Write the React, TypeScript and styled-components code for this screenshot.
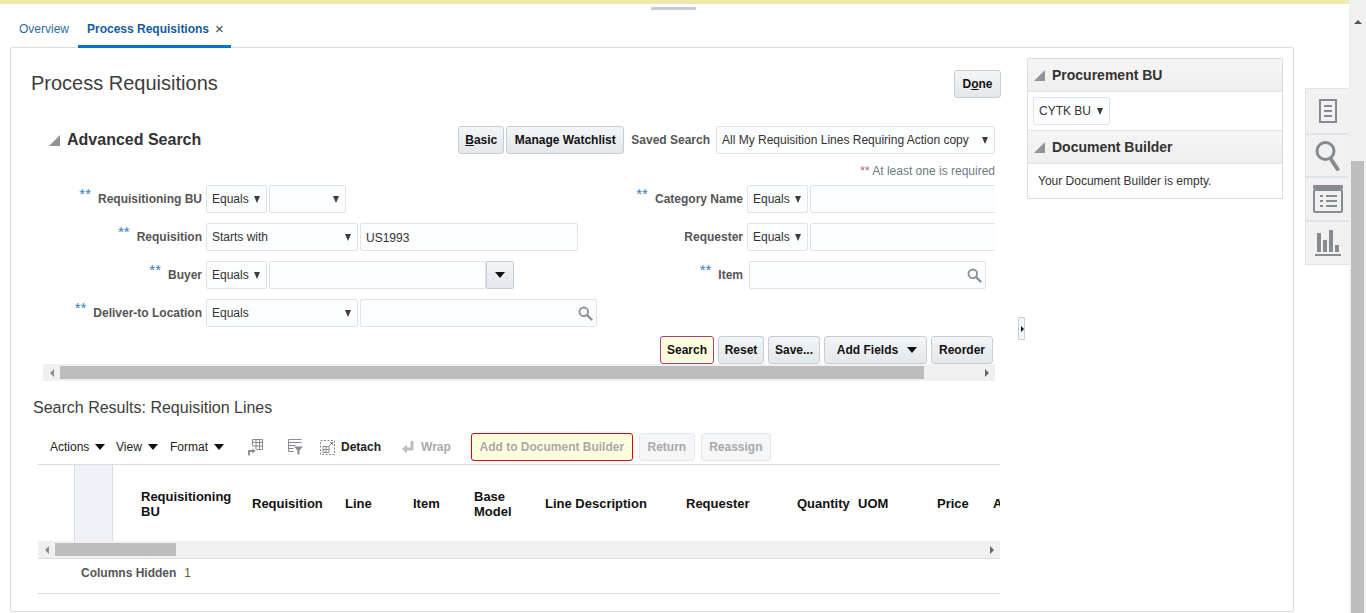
import React from "react";
import styled, { createGlobalStyle } from "styled-components";

const GlobalStyle = createGlobalStyle`
  html, body {
    margin: 0;
    padding: 0;
    height: 613px;
    overflow: hidden;
    background: #ffffff;
    font-family: "Liberation Sans", Arial, sans-serif;
    font-size: 12px;
    color: #333333;
  }
  * {
    box-sizing: border-box;
  }
`;

const Page = styled.div`
  display: flex;
  width: 1366px;
  height: 613px;
  overflow: hidden;
  position: relative;
`;

const Main = styled.div`
  width: 1349px;
  display: flex;
  flex-direction: column;
`;

const TopStripe = styled.div`
  height: 4px;
  background: #efe9ab;
`;

const TopHandle = styled.div`
  position: absolute;
  top: 7px;
  left: 651px;
  width: 45px;
  height: 3px;
  background: #c6ccd2;
  border-radius: 1px;
`;

const VScroll = styled.div`
  width: 17px;
  background: #f0f0f0;
  display: flex;
  flex-direction: column;
  align-items: center;
`;

const VArrowBox = styled.div`
  height: 161px;
  padding-top: 6px;
`;

const VThumb = styled.div`
  width: 13px;
  flex: 1;
  background: #bdbdbd;
`;

const TabBar = styled.div`
  height: 44px;
  margin-bottom: -1px;
  padding-left: 10px;
  display: flex;
  position: relative;
  z-index: 1;
`;

const Tab = styled.div<{ $active?: boolean }>`
  display: flex;
  align-items: center;
  padding: 8px 0 0 9px;
  width: ${(p) => (p.$active ? "153px" : "68px")};
  color: ${(p) => (p.$active ? "#145c9e" : "#2a6ca8")};
  font-weight: ${(p) => (p.$active ? "bold" : "normal")};
  border-bottom: 3px solid ${(p) => (p.$active ? "#0572ce" : "transparent")};
`;

const TabClose = styled.span`
  margin-left: 6px;
  font-size: 15px;
  line-height: 12px;
  font-weight: normal;
  color: #444444;
`;

const Body = styled.div`
  display: flex;
  padding-left: 10px;
`;

const Frame = styled.div`
  width: 1284px;
  height: 565px;
  border: 1px solid #d6dfe6;
  border-radius: 2px;
  display: flex;
`;

const LeftCol = styled.div`
  width: 1006px;
  flex-shrink: 0;
`;

const TitleRow = styled.div`
  margin-top: 22px;
  padding: 0 16px 0 20px;
  height: 28px;
  display: flex;
  align-items: center;
  justify-content: space-between;
`;

const PageTitle = styled.h1`
  margin: 0 0 2px;
  font-size: 20px;
  font-weight: normal;
  color: #3d3d3d;
`;

const Button = styled.button<{ $width?: number; $tone?: "focus" | "disabled" | "alert" }>`
  height: 28px;
  width: ${(p) => (p.$width ? `${p.$width}px` : "auto")};
  padding: 0;
  flex-shrink: 0;
  font-family: inherit;
  font-size: 12px;
  font-weight: bold;
  border-radius: 3px;
  color: ${(p) => (p.$tone === "disabled" || p.$tone === "alert" ? "#a9a9a9" : "#111111")};
  border: 1px solid
    ${(p) =>
      p.$tone === "focus"
        ? "#a8407f"
        : p.$tone === "alert"
        ? "#e60000"
        : p.$tone === "disabled"
        ? "#e4e8ec"
        : "#c4ced7"};
  background: ${(p) =>
    p.$tone === "focus" || p.$tone === "alert"
      ? "#ffffe0"
      : p.$tone === "disabled"
      ? "#f4f6f8"
      : "linear-gradient(#f3f5f7, #e4e8ec)"};
`;

const SearchBox = styled.div`
  margin: 28px 0 0 32px;
  width: 952px;
`;

const SearchHeader = styled.div`
  height: 28px;
  display: flex;
  align-items: center;
  padding-left: 6px;
  gap: 2px;
`;

const Disclosure = styled.span`
  width: 0;
  height: 0;
  flex-shrink: 0;
  border-bottom: 11px solid #909498;
  border-left: 11px solid transparent;
`;

const SearchHeading = styled.h2`
  margin: 0 auto 0 5px;
  font-size: 16px;
  font-weight: bold;
  color: #333333;
`;

const SavedLabel = styled.span`
  margin: 0 4px 0 5px;
  font-weight: bold;
  color: #555555;
`;

const RequiredNote = styled.div`
  margin-top: 8px;
  height: 18px;
  line-height: 18px;
  text-align: right;
  color: #6b7b88;
`;

const RedStars = styled.span`
  color: #b06a6a;
`;

const FormGrid = styled.div`
  margin-top: 5px;
  display: flex;
  overflow: hidden;
`;

const FormColumn = styled.div<{ $width: number }>`
  width: ${(p) => p.$width}px;
  flex-shrink: 0;
  display: flex;
  flex-direction: column;
  gap: 10px;
`;

const FormRow = styled.div`
  height: 28px;
  display: flex;
  align-items: center;
`;

const RowLabel = styled.div<{ $width: number }>`
  width: ${(p) => p.$width}px;
  flex-shrink: 0;
  margin-right: 4px;
  display: flex;
  justify-content: flex-end;
  white-space: nowrap;
  font-weight: bold;
  color: #555555;
`;

const Stars = styled.span`
  color: #2f7fc1;
  font-size: 15px;
  font-weight: normal;
  line-height: 10px;
  margin-right: 7px;
  transform: translateY(-3px);
`;

const Select = styled.div<{ $width: number }>`
  width: ${(p) => p.$width}px;
  height: 28px;
  flex-shrink: 0;
  margin-right: 2px;
  padding: 0 6px 0 5px;
  display: flex;
  align-items: center;
  justify-content: space-between;
  background: #fcfdfe;
  border: 1px solid #dfe4ea;
  border-radius: 2px;
  color: #333333;
`;

const SavedSelect = styled(Select)`
  margin-right: 0;
`;

const Caret = styled.span<{ $big?: boolean }>`
  width: 0;
  height: 0;
  flex-shrink: 0;
  border-left: ${(p) => (p.$big ? 5.5 : 3.5)}px solid transparent;
  border-right: ${(p) => (p.$big ? 5.5 : 3.5)}px solid transparent;
  border-top: ${(p) => (p.$big ? 6 : 7)}px solid ${(p) => (p.$big ? "#111111" : "#3c3c3c")};
`;

const Input = styled.div<{ $width: number; $indent?: number }>`
  width: ${(p) => p.$width}px;
  height: 28px;
  flex-shrink: 0;
  margin-left: ${(p) => p.$indent ?? 0}px;
  padding: 1px 3px 0 5px;
  display: flex;
  align-items: center;
  justify-content: space-between;
  background: #fcfdfe;
  border: 1px solid #dfe4ea;
  border-radius: 2px;
  color: #333333;
`;

const ComboButton = styled.div`
  width: 28px;
  height: 28px;
  flex-shrink: 0;
  display: flex;
  align-items: center;
  justify-content: center;
  background: linear-gradient(#f3f5f7, #e4e8ec);
  border: 1px solid #c4ced7;
  border-radius: 0 2px 2px 0;
`;

const SearchActions = styled.div`
  margin-top: 9px;
  padding-right: 2px;
  display: flex;
  justify-content: flex-end;
  gap: 4px;
`;

const AddFieldsInner = styled.span`
  display: flex;
  align-items: center;
  justify-content: center;
  gap: 9px;
  padding-left: 3px;
`;

const HScroll = styled.div`
  height: 17px;
  display: flex;
  align-items: center;
  background: #f0f0f0;
`;

const ScrollEnd = styled.div`
  width: 17px;
  flex-shrink: 0;
  display: flex;
  align-items: center;
  justify-content: center;
`;

const ScrollTrack = styled.div`
  flex: 1;
`;

const ScrollThumb = styled.div<{ $width: number }>`
  width: ${(p) => p.$width}px;
  height: 13px;
  background: #bdbdbd;
`;

const Arrow = styled.span<{ $dir: "left" | "right" | "up" }>`
  width: 0;
  height: 0;
  ${(p) =>
    p.$dir === "up"
      ? "border-left: 4px solid transparent; border-right: 4px solid transparent; border-bottom: 4px solid #555555;"
      : p.$dir === "left"
      ? "border-top: 4px solid transparent; border-bottom: 4px solid transparent; border-right: 4px solid #8c8c8c;"
      : "border-top: 4px solid transparent; border-bottom: 4px solid transparent; border-left: 4px solid #666666;"}
`;

const ResultsHeading = styled.h2`
  margin: 17px 0 0 22px;
  height: 20px;
  line-height: 20px;
  font-size: 16px;
  font-weight: normal;
  color: #3d3d3d;
`;

const Results = styled.div`
  margin: 15px 0 0 27px;
  width: 962px;
`;

const Toolbar = styled.div`
  height: 32px;
  padding: 0 0 3px 12px;
  display: flex;
  align-items: center;
  border-bottom: 1px solid #d6dfe6;
`;

const MenuItem = styled.span<{ $width: number }>`
  width: ${(p) => p.$width}px;
  flex-shrink: 0;
  display: flex;
  align-items: center;
  gap: 6px;
  color: #222222;
`;

const ToolIcon = styled.svg<{ $after: number }>`
  margin-right: ${(p) => p.$after}px;
  flex-shrink: 0;
`;

const ToolText = styled.span<{ $off?: boolean; $after: number }>`
  margin-right: ${(p) => p.$after}px;
  font-weight: bold;
  color: ${(p) => (p.$off ? "#a9a9a9" : "#222222")};
`;

const ToolButtons = styled.div`
  display: flex;
  gap: 6px;
`;

const HeaderRow = styled.div`
  height: 76px;
  padding-left: 36px;
  display: flex;
  align-items: center;
  overflow: hidden;
`;

const RowHeadCell = styled.div`
  width: 39px;
  height: 76px;
  flex-shrink: 0;
  margin-right: 28px;
  background: #f0f2f7;
  border-left: 1px solid #d6dfe6;
  border-right: 1px solid #d6dfe6;
`;

const HeaderCell = styled.div<{ $width: number; $wrapped?: boolean }>`
  width: ${(p) => p.$width}px;
  flex-shrink: 0;
  padding-top: ${(p) => (p.$wrapped ? "2px" : "0")};
  font-size: 13px;
  font-weight: bold;
  line-height: 15px;
  color: #111111;
`;

const ResultsFoot = styled.div`
  height: 36px;
  padding: 0 0 7px 43px;
  display: flex;
  align-items: center;
  gap: 8px;
  border-top: 1px solid #d6dfe6;
  border-bottom: 1px solid #d6dfe6;
  font-weight: bold;
  color: #555555;
`;

const FootCount = styled.span`
  color: #6e5a1e;
  font-weight: normal;
`;

const SplitCol = styled.div`
  width: 10px;
  flex-shrink: 0;
`;

const SplitHandle = styled.div`
  margin: 269px 0 0 1px;
  width: 7px;
  height: 23px;
  display: flex;
  align-items: center;
  padding-left: 2px;
  background: #f3f6f9;
  border: 1px solid #c6d0da;
  border-radius: 1px;
`;

const SplitArrow = styled.span`
  width: 0;
  height: 0;
  border-top: 3px solid transparent;
  border-bottom: 3px solid transparent;
  border-left: 3px solid #111111;
`;

const RightCol = styled.div`
  margin-top: 10px;
  width: 256px;
  height: 141px;
  border: 1px solid #d6dfe6;
  border-radius: 1px;
`;

const PanelHeader = styled.div<{ $height: number }>`
  height: ${(p) => p.$height}px;
  display: flex;
  align-items: center;
  gap: 7px;
  padding-left: 6px;
  background: linear-gradient(#f5f5f5, #efefef);
  border-bottom: 1px solid #dfe4ea;
`;

const PanelTitle = styled.h3`
  margin: 0;
  font-size: 14px;
  font-weight: bold;
  color: #333333;
`;

const PanelBody = styled.div`
  height: 39px;
  padding: 5px 0 0 5px;
  border-bottom: 1px solid #dfe4ea;
`;

const PanelNote = styled.div`
  height: 35px;
  padding: 0 0 2px 10px;
  display: flex;
  align-items: center;
  color: #333333;
`;

const SideTabs = styled.div`
  margin: 41px 0 0 11px;
  width: 44px;
  height: 177px;
  background: #f1f1f1;
  border: 1px solid #dfe4ea;
  border-right: none;
  display: flex;
  flex-direction: column;
`;

const SideTab = styled.div`
  height: 44px;
  display: flex;
  align-items: center;
  justify-content: center;
  & + & {
    border-top: 2px solid #dfe4ea;
  }
`;

const ICON = "#858b90";

const LookupIcon = () => (
  <svg width="15" height="15" viewBox="0 0 15 15">
    <circle cx="5.8" cy="5.8" r="4.3" fill="none" stroke="#8b9197" strokeWidth="1.8" />
    <line x1="9" y1="9" x2="13.5" y2="13.5" stroke="#8b9197" strokeWidth="2.4" strokeLinecap="round" />
  </svg>
);

const App: React.FC = () => {
  return (
    <Page>
      <GlobalStyle />
      <TopHandle />
      <Main>
        <TopStripe />
        <TabBar>
          <Tab>Overview</Tab>
          <Tab $active>
            Process Requisitions
            <TabClose>×</TabClose>
          </Tab>
        </TabBar>
        <Body>
          <Frame>
            <LeftCol>
              <TitleRow>
                <PageTitle>Process Requisitions</PageTitle>
                <Button $width={47}>
                  D<u>o</u>ne
                </Button>
              </TitleRow>

              <SearchBox>
                <SearchHeader>
                  <Disclosure />
                  <SearchHeading>Advanced Search</SearchHeading>
                  <Button $width={46}>
                    <u>B</u>asic
                  </Button>
                  <Button $width={118}>Manage Watchlist</Button>
                  <SavedLabel>Saved Search</SavedLabel>
                  <SavedSelect $width={279}>
                    All My Requisition Lines Requiring Action copy
                    <Caret />
                  </SavedSelect>
                </SearchHeader>

                <RequiredNote>
                  <RedStars>**</RedStars> At least one is required
                </RequiredNote>

                <FormGrid>
                  <FormColumn $width={560}>
                    <FormRow>
                      <RowLabel $width={159}>
                        <Stars>**</Stars>Requisitioning BU
                      </RowLabel>
                      <Select $width={61}>
                        Equals
                        <Caret />
                      </Select>
                      <Select $width={77}>
                        <span />
                        <Caret />
                      </Select>
                    </FormRow>
                    <FormRow>
                      <RowLabel $width={159}>
                        <Stars>**</Stars>Requisition
                      </RowLabel>
                      <Select $width={152}>
                        Starts with
                        <Caret />
                      </Select>
                      <Input $width={218}>US1993</Input>
                    </FormRow>
                    <FormRow>
                      <RowLabel $width={159}>
                        <Stars>**</Stars>Buyer
                      </RowLabel>
                      <Select $width={61}>
                        Equals
                        <Caret />
                      </Select>
                      <Input $width={217} />
                      <ComboButton>
                        <Caret $big />
                      </ComboButton>
                    </FormRow>
                    <FormRow>
                      <RowLabel $width={159}>
                        <Stars>**</Stars>Deliver-to Location
                      </RowLabel>
                      <Select $width={152}>
                        Equals
                        <Caret />
                      </Select>
                      <Input $width={237}>
                        <span />
                        <LookupIcon />
                      </Input>
                    </FormRow>
                  </FormColumn>
                  <FormColumn $width={392}>
                    <FormRow>
                      <RowLabel $width={140}>
                        <Stars>**</Stars>Category Name
                      </RowLabel>
                      <Select $width={61}>
                        Equals
                        <Caret />
                      </Select>
                      <Input $width={200} />
                    </FormRow>
                    <FormRow>
                      <RowLabel $width={140}>Requester</RowLabel>
                      <Select $width={61}>
                        Equals
                        <Caret />
                      </Select>
                      <Input $width={200} />
                    </FormRow>
                    <FormRow>
                      <RowLabel $width={140}>
                        <Stars>**</Stars>Item
                      </RowLabel>
                      <Input $width={237} $indent={2}>
                        <span />
                        <LookupIcon />
                      </Input>
                    </FormRow>
                  </FormColumn>
                </FormGrid>

                <SearchActions>
                  <Button $width={54} $tone="focus">
                    Search
                  </Button>
                  <Button $width={46}>Reset</Button>
                  <Button $width={52}>Save...</Button>
                  <Button $width={103}>
                    <AddFieldsInner>
                      Add Fields
                      <Caret $big />
                    </AddFieldsInner>
                  </Button>
                  <Button $width={62}>Reorder</Button>
                </SearchActions>
                <HScroll>
                  <ScrollEnd>
                    <Arrow $dir="left" />
                  </ScrollEnd>
                  <ScrollTrack>
                    <ScrollThumb $width={864} />
                  </ScrollTrack>
                  <ScrollEnd>
                    <Arrow $dir="right" />
                  </ScrollEnd>
                </HScroll>
              </SearchBox>

              <ResultsHeading>Search Results: Requisition Lines</ResultsHeading>

              <Results>
                <Toolbar>
                  <MenuItem $width={66}>
                    Actions
                    <Caret $big />
                  </MenuItem>
                  <MenuItem $width={54}>
                    View
                    <Caret $big />
                  </MenuItem>
                  <MenuItem $width={78}>
                    Format
                    <Caret $big />
                  </MenuItem>
                  <ToolIcon $after={25} width="15" height="17" viewBox="0 0 15 17" fill="none" stroke={ICON}>
                    <path d="M4.5 .5h10v10h-6M4.5 .5v6M4.5 3.5h10M4.5 7h10M8 .5v10M11.5 .5v10" />
                    <path d="M1 16.5v-4.5h5" strokeWidth="1.8" />
                    <path d="M4.5 9.5l3 2.5-3 2.5z" fill={ICON} stroke="none" />
                  </ToolIcon>
                  <ToolIcon $after={17} width="15" height="16" viewBox="0 0 15 16" fill="none" stroke={ICON}>
                    <path d="M.5 .5h13M.5 3.5h13M.5 6.5h7M.5 9.5h5M.5 12.5h5M.5 .5v12" />
                    <path d="M6 7.5h9l-3.5 4v4h-2v-4z" fill={ICON} stroke="none" />
                  </ToolIcon>
                  <ToolIcon $after={6} width="15" height="15" viewBox="0 0 15 15" fill="none" stroke={ICON}>
                    <rect x=".5" y=".5" width="14" height="14" strokeDasharray="2 1.5" />
                    <path d="M3 6.5h6v6h-6zM3 9.5h6M6 6.5v6" />
                    <path d="M9 6l3.5-3.5M10 2.5h2.5v2.5" />
                  </ToolIcon>
                  <ToolText $after={21}>Detach</ToolText>
                  <ToolIcon $after={7} width="12" height="13" viewBox="0 0 12 13" fill="#bdbdbd">
                    <path d="M8.5 0h3v9.5h-6.5v3l-5-4.5 5-4.5v3h3.5z" />
                  </ToolIcon>
                  <ToolText $off $after={20}>
                    Wrap
                  </ToolText>
                  <ToolButtons>
                    <Button $width={162} $tone="alert">
                      Add to Document Builder
                    </Button>
                    <Button $width={56} $tone="disabled">
                      Return
                    </Button>
                    <Button $width={70} $tone="disabled">
                      Reassign
                    </Button>
                  </ToolButtons>
                </Toolbar>
                <HeaderRow>
                  <RowHeadCell />
                  <HeaderCell $width={111} $wrapped>
                    Requisitioning
                    <br />
                    BU
                  </HeaderCell>
                  <HeaderCell $width={93}>Requisition</HeaderCell>
                  <HeaderCell $width={68}>Line</HeaderCell>
                  <HeaderCell $width={61}>Item</HeaderCell>
                  <HeaderCell $width={71} $wrapped>
                    Base
                    <br />
                    Model
                  </HeaderCell>
                  <HeaderCell $width={141}>Line Description</HeaderCell>
                  <HeaderCell $width={111}>Requester</HeaderCell>
                  <HeaderCell $width={61}>Quantity</HeaderCell>
                  <HeaderCell $width={79}>UOM</HeaderCell>
                  <HeaderCell $width={56}>Price</HeaderCell>
                  <HeaderCell $width={60}>Amount</HeaderCell>
                </HeaderRow>
                <HScroll>
                  <ScrollEnd>
                    <Arrow $dir="left" />
                  </ScrollEnd>
                  <ScrollTrack>
                    <ScrollThumb $width={121} />
                  </ScrollTrack>
                  <ScrollEnd>
                    <Arrow $dir="right" />
                  </ScrollEnd>
                </HScroll>
                <ResultsFoot>
                  Columns Hidden
                  <FootCount>1</FootCount>
                </ResultsFoot>
              </Results>
            </LeftCol>

            <SplitCol>
              <SplitHandle>
                <SplitArrow />
              </SplitHandle>
            </SplitCol>

            <RightCol>
              <PanelHeader $height={33}>
                <Disclosure />
                <PanelTitle>Procurement BU</PanelTitle>
              </PanelHeader>
              <PanelBody>
                <Select $width={77}>
                  CYTK BU
                  <Caret />
                </Select>
              </PanelBody>
              <PanelHeader $height={33}>
                <Disclosure />
                <PanelTitle>Document Builder</PanelTitle>
              </PanelHeader>
              <PanelNote>Your Document Builder is empty.</PanelNote>
            </RightCol>
          </Frame>

          <SideTabs>
            <SideTab>
              <svg width="18" height="24" viewBox="0 0 18 24" fill="none" stroke={ICON} strokeWidth="2">
                <rect x="1" y="1" width="16" height="22" />
                <path d="M5 7h8M5 12h8M5 17h8" />
              </svg>
            </SideTab>
            <SideTab>
              <svg width="26" height="32" viewBox="0 0 26 32" fill="none" stroke={ICON}>
                <circle cx="10.5" cy="11" r="8.5" strokeWidth="3" />
                <line x1="16.5" y1="20" x2="22.5" y2="29" strokeWidth="4" strokeLinecap="round" />
              </svg>
            </SideTab>
            <SideTab>
              <svg width="30" height="28" viewBox="0 0 30 28" fill="none" stroke={ICON}>
                <rect x="1" y="5" width="28" height="22" rx="1" strokeWidth="2" />
                <rect x="0" y="0" width="30" height="4" rx="1" fill={ICON} stroke="none" />
                <path d="M7 11h3M13 11h11M7 16h3M13 16h11M7 21h3M13 21h11" strokeWidth="2" />
              </svg>
            </SideTab>
            <SideTab>
              <svg width="26" height="26" viewBox="0 0 26 26" fill={ICON}>
                <rect x="2" y="3" width="4" height="19" />
                <rect x="8" y="10" width="4" height="12" />
                <rect x="14" y="0" width="4" height="22" />
                <rect x="20" y="15" width="4" height="7" />
                <rect x="0" y="24" width="26" height="2" />
              </svg>
            </SideTab>
          </SideTabs>
        </Body>
      </Main>
      <VScroll>
        <VArrowBox>
          <Arrow $dir="up" />
        </VArrowBox>
        <VThumb />
      </VScroll>
    </Page>
  );
};

export default App;
